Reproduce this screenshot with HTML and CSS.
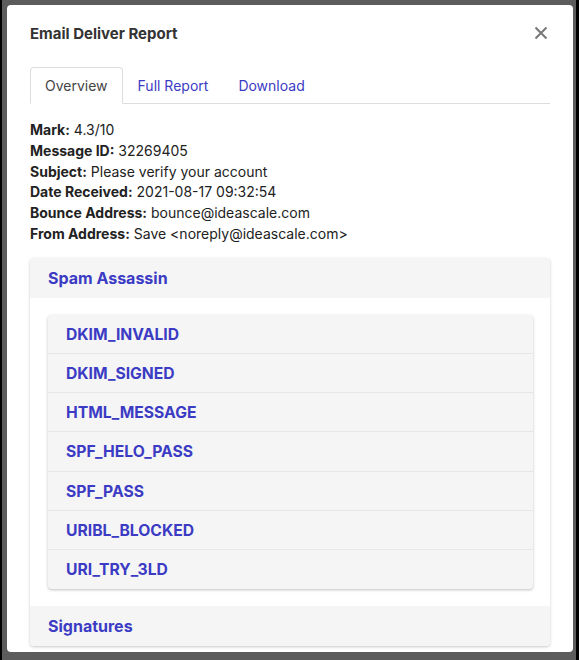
FILE: index.html
```html
<!DOCTYPE HTML>
<html>
	<head>
		<meta charset="utf-8">
		<link rel="stylesheet" href="styles.css">
	</head>
	<body>
		<div class="screen">
			<div class="modal">
				<div class="modal-header">
					<h3>Email Deliver Report</h3>
					<button class="close" aria-label="Close">
						<svg width="14" height="14" viewBox="0 0 14 14">
							<path d="M1.5 1.5 L12.5 12.5 M12.5 1.5 L1.5 12.5" stroke="#777" stroke-width="2" fill="none"/>
						</svg>
					</button>
				</div>
				<ul class="tabs">
					<li class="active">Overview</li>
					<li>Full Report</li>
					<li>Download</li>
				</ul>
				<div class="info">
					<div><b>Mark:</b> 4.3/10</div>
					<div><b>Message ID:</b> 32269405</div>
					<div><b>Subject:</b> Please verify your account</div>
					<div><b>Date Received:</b> 2021-08-17 09:32:54</div>
					<div><b>Bounce Address:</b> bounce@ideascale.com</div>
					<div><b>From Address:</b> Save &lt;noreply@ideascale.com&gt;</div>
				</div>
				<div class="panel">
					<div class="panel-head">Spam Assassin</div>
					<div class="panel-body">
						<ul class="rules">
							<li>DKIM_INVALID</li>
							<li>DKIM_SIGNED</li>
							<li>HTML_MESSAGE</li>
							<li>SPF_HELO_PASS</li>
							<li>SPF_PASS</li>
							<li>URIBL_BLOCKED</li>
							<li>URI_TRY_3LD</li>
						</ul>
					</div>
					<div class="panel-head">Signatures</div>
				</div>
			</div>
		</div>
	</body>
</html>
```

FILE: styles.css
```css
html, body {
	margin: 0;
	height: 100%;
}

body {
	background: #000;
	font-family: Inter, "Noto Sans", sans-serif;
	color: #222;
}

.screen {
	height: 660px;
	box-sizing: border-box;
	margin: 0 3px 0 2px;
	padding: 5px 3px 8px 5px;
	background: #5c5c5c;
}

.modal {
	height: 647px;
	box-sizing: border-box;
	background: #fff;
	border-radius: 4px;
	padding: 17px 23px 0 23px;
}

.modal-header {
	display: flex;
	align-items: center;
	justify-content: space-between;
	height: 22px;
}

.modal-header h3 {
	margin: 0;
	font-size: 15px;
	font-weight: 700;
	color: #333;
}

.close {
	border: none;
	background: none;
	padding: 0;
	margin-right: 2px;
	width: 14px;
	height: 14px;
	display: flex;
}

.tabs {
	list-style: none;
	margin: 23px 0 0 0;
	padding: 0;
	display: flex;
	border-bottom: 1px solid #ddd;
}

.tabs li {
	height: 35px;
	line-height: 35px;
	padding: 0 14px;
	margin-bottom: -1px;
	font-size: 14px;
	color: #3b3bc4;
	border: 1px solid transparent;
	border-radius: 4px 4px 0 0;
}

.tabs li.active {
	color: #444;
	background: #fff;
	border-color: #ddd #ddd #fff #ddd;
}

.info {
	margin-top: 16px;
	font-size: 14px;
	line-height: 20.8px;
}

.info b {
	font-weight: 700;
}

.panel {
	margin: 13px 0 0 0;
	border-radius: 4px;
	box-shadow: 0 1px 3px rgba(0, 0, 0, 0.22);
	overflow: hidden;
}

.panel-head {
	height: 40px;
	line-height: 40px;
	padding: 0 18px;
	background: #f5f5f5;
	color: #3b3bc4;
	font-size: 16px;
	font-weight: 700;
}

.panel-head + .panel-body + .panel-head {
	line-height: 41px;
}

.panel-body {
	padding: 17px 17px 17px 18px;
	background: #fff;
}

.rules {
	list-style: none;
	margin: 0;
	padding: 0;
	background: #f5f5f5;
	border-radius: 4px;
	box-shadow: 0 1px 3px rgba(0, 0, 0, 0.25);
	overflow: hidden;
}

.rules li {
	height: 36.2px;
	line-height: 36.2px;
	padding: 2px 18px 0;
	border-bottom: 1px solid #e6e6e6;
	color: #3b3bc4;
	font-size: 15.7px;
	font-weight: 700;
}

.rules li:last-child {
	border-bottom: none;
	height: 37px;
}
```
